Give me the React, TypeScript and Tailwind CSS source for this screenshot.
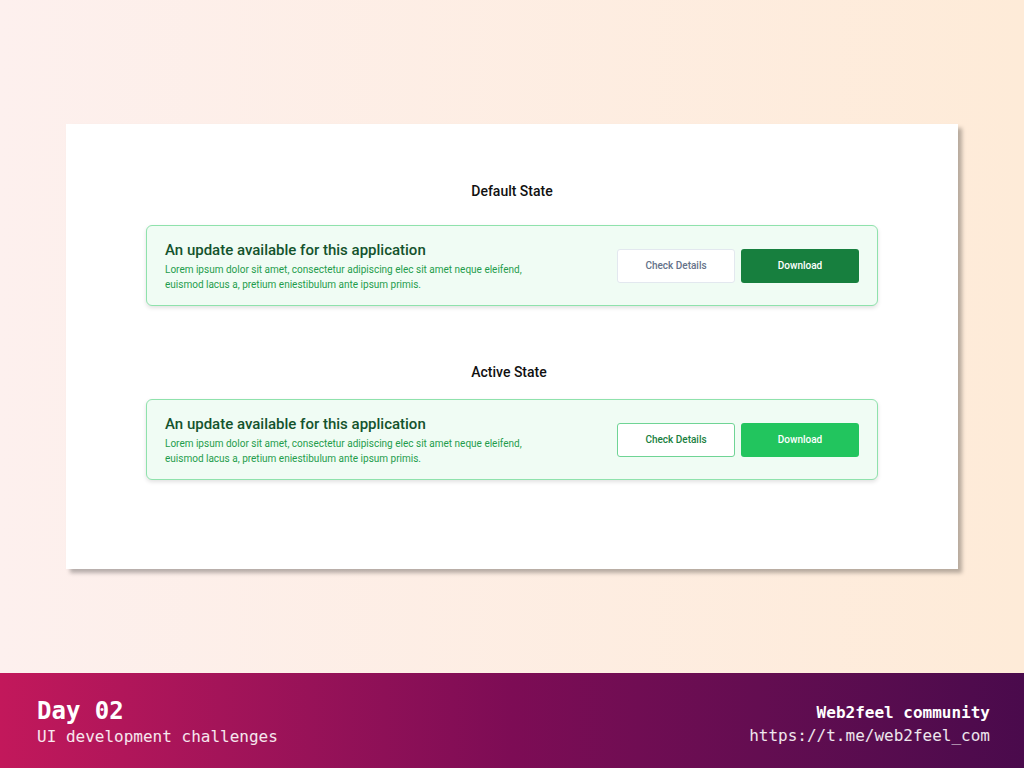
const sans = { fontFamily: 'Roboto, "Noto Sans", Arial, sans-serif' };
const mono = { fontFamily: '"DejaVu Sans Mono", "Liberation Mono", monospace' };

function UpdateBanner({ active }: { active?: boolean }) {
  return (
    <div className="flex h-[81px] items-center justify-between rounded-[6px] border border-[#8fe2ac] bg-[#f0fcf4] pl-[18px] pr-[18px] shadow-[0_2px_4px_rgba(0,0,0,0.12)]">
      <div className="flex flex-col">
        <h3 className="text-[15px] font-medium leading-[20px] text-[#14532d]">An update available for this application</h3>
        <p className="mt-[2px] w-[370px] text-[10px] leading-[15px] text-[#1f9c4c]">
          Lorem ipsum dolor sit amet, consectetur adipiscing elec sit amet neque eleifend, euismod lacus a, pretium eniestibulum ante ipsum primis.
        </p>
      </div>
      <div className="flex gap-[6px]">
        <button
          className={
            active
              ? 'h-[34px] w-[118px] rounded-[3px] border border-[#6fd495] bg-white text-[10px] font-medium text-[#1a7f41]'
              : 'h-[34px] w-[118px] rounded-[3px] border border-[#e3e8ef] bg-white text-[10px] font-medium text-[#657289]'
          }
        >
          Check Details
        </button>
        <button
          className={
            active
              ? 'h-[34px] w-[118px] rounded-[3px] bg-[#22c55e] text-[10px] font-medium text-white'
              : 'h-[34px] w-[118px] rounded-[3px] bg-[#177f3e] text-[10px] font-medium text-white'
          }
        >
          Download
        </button>
      </div>
    </div>
  );
}

export default function App() {
  return (
    <div className="flex h-[768px] w-[1024px] flex-col overflow-hidden" style={sans}>
      <div className="flex-1 bg-gradient-to-r from-[#fdf0ee] to-[#feebd8] pl-[66px] pt-[124px]">
        <div className="h-[445px] w-[892px] bg-white px-[80px] pt-[57px] shadow-[4px_4px_4px_rgba(0,0,0,0.28)]">
          <h2 className="text-center text-[14px] font-medium leading-[20px] text-[#111]">Default State</h2>
          <div className="mt-[24px]">
            <UpdateBanner />
          </div>
          <h2 className="mt-[56px] pr-[6px] text-center text-[14px] font-medium leading-[20px] text-[#111]">Active State</h2>
          <div className="mt-[17px]">
            <UpdateBanner active />
          </div>
        </div>
      </div>
      <footer
        className="flex h-[95px] items-start justify-between bg-gradient-to-r from-[#c2185b] via-[#7d0c55] to-[#4a0a4c] pl-[37px] pr-[34px] text-white"
        style={mono}
      >
        <div className="flex flex-col pt-[24px]">
          <span className="text-[24px] font-bold leading-[28px]">Day 02</span>
          <span className="mt-[1px] text-[16px] leading-[22px] text-white/90">UI development challenges</span>
        </div>
        <div className="flex flex-col items-end pt-[29px]">
          <span className="text-[16px] font-bold leading-[22px]">Web2feel community</span>
          <span className="mt-[1px] text-[16px] leading-[22px] text-white/90">https://t.me/web2feel_com</span>
        </div>
      </footer>
    </div>
  );
}
